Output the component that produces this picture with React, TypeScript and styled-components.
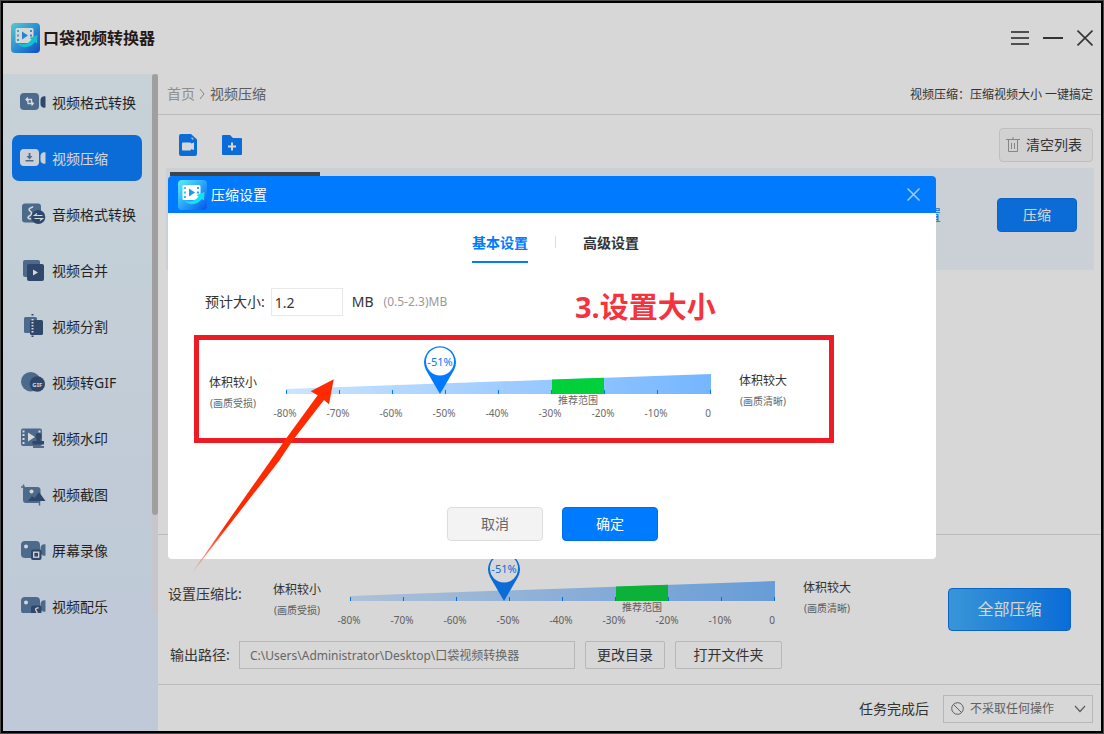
import React, { useId, useState } from "react";
import styled, { createGlobalStyle } from "styled-components";

const BLUE = "#007aff";
const SLATE = "#5277a0";
const NAVY = "#2e4c77";

const GlobalStyle = createGlobalStyle`
  *, *::before, *::after { box-sizing: border-box; }
  body {
    margin: 0;
    background: #fff;
    color: #333;
    font: 14px/20px "Noto Sans", "Noto Sans CJK SC", sans-serif;
  }
  button, input, select { font: inherit; color: inherit; margin: 0; }
  button { cursor: pointer; }
  svg { display: block; flex: none; }
`;

/* ---------- window frame ---------- */

const Frame = styled.div`
  min-height: 100vh;
  display: flex;
  border: 1px solid #4a4a4a;
`;

const Window = styled.div`
  position: relative;
  flex: 1;
  min-width: 0;
  display: flex;
  flex-direction: column;
  border: 2px solid #000;
  background: #fff;
`;

const TitleBar = styled.header`
  height: 71px;
  padding: 0 8px 2px;
  display: flex;
  align-items: center;
  justify-content: space-between;
`;

const Brand = styled.h1`
  margin: 0;
  display: flex;
  align-items: center;
  gap: 3px;
  font-size: 16px;
  font-weight: 700;
  color: #1e1210;
`;

const WindowControls = styled.div`
  display: flex;
  align-items: center;
  gap: 14px;
`;

const IconButton = styled.button`
  padding: 0;
  border: 0;
  background: none;
  display: flex;
  color: inherit;
`;

const Columns = styled.div`
  flex: 1;
  display: flex;
  min-height: 0;
`;

/* ---------- sidebar ---------- */

const Sidebar = styled.aside`
  flex: none;
  width: 155px;
  padding-bottom: 102px;
  background: linear-gradient(#ebf9ff, #e1eeff 85%);
  display: flex;
  align-items: flex-start;
`;

const NavList = styled.nav`
  flex: 1;
  padding: 5px 10px 0 9px;
  display: flex;
  flex-direction: column;
  gap: 10px;
`;

const NavItem = styled.a<{ $active?: boolean }>`
  flex: none;
  height: 46px;
  padding-left: 8px;
  display: flex;
  align-items: center;
  gap: 4px;
  border-radius: 7px;
  white-space: nowrap;
  text-decoration: none;
  color: ${(p) => (p.$active ? "#fff" : "#1c1c1c")};
  background: ${(p) => (p.$active ? BLUE : "transparent")};

  span { padding-top: 2px; }
`;

const ScrollTrack = styled.div`
  width: 6px;
  height: 539px;
  background: #ececf0;
`;

const ScrollThumb = styled.div`
  height: 441px;
  border-radius: 3px;
  background: #bababa;
`;

/* ---------- main column ---------- */

const Main = styled.main`
  flex: 1;
  min-width: 0;
  display: flex;
  flex-direction: column;
`;

const BreadcrumbRow = styled.div`
  height: 41px;
  padding: 0 8px 0 9px;
  display: flex;
  align-items: center;
  justify-content: space-between;
  border-bottom: 1px solid #ddd;
`;

const Breadcrumb = styled.nav`
  display: flex;
  align-items: center;
  gap: 4px;
  color: #666;

  a {
    color: #a4a4a4;
    text-decoration: none;
  }
`;

const Hint = styled.p`
  margin: 0;
  padding-top: 2px;
  font-size: 12px;
`;

const Toolbar = styled.div`
  padding: 13px 8px 6px 21px;
  display: flex;
  align-items: center;
  gap: 25px;
`;

const ClearButton = styled.button`
  margin-left: auto;
  width: 94px;
  height: 34px;
  padding: 0 4px 0 0;
  display: flex;
  align-items: center;
  justify-content: center;
  gap: 6px;
  border: 1px solid #e2e2e2;
  border-radius: 4px;
  background: #f8f8f8;
`;

const FileList = styled.div`
  flex: 1;
  padding: 0 7px 0 8px;
`;

const FileRow = styled.div`
  height: 102px;
  padding: 0 17px 8px;
  display: flex;
  align-items: center;
  justify-content: flex-end;
  gap: 56px;
  background: #f1f7ff;
`;

const ThumbEdge = styled.div`
  align-self: flex-start;
  width: 150px;
  height: 85px;
  margin: 4px auto 0 -13px;
  background: #474747;
`;

const TextLink = styled.a`
  color: ${BLUE};
  text-decoration: none;
`;

const Button = styled.button<{ $width: number; $height: number; $look?: "plain" | "soft" | "glow" }>`
  flex: none;
  width: ${(p) => p.$width}px;
  height: ${(p) => p.$height}px;
  padding: 0;
  border: 1px solid
    ${(p) => (p.$look === "plain" ? "#d8d8d8" : p.$look === "soft" ? "#ddd" : "#006fe8")};
  border-radius: ${(p) => (p.$look === "plain" ? 2 : 4)}px;
  color: ${(p) => (p.$look === "plain" ? "#333" : p.$look === "soft" ? "#666" : "#fff")};
  background: ${(p) =>
    p.$look === "plain"
      ? "transparent"
      : p.$look === "soft"
        ? "#f3f3f3"
        : p.$look === "glow"
          ? "linear-gradient(90deg, #39aeff, #007aff)"
          : BLUE};
  font-size: ${(p) => (p.$look === "glow" ? 16 : 14)}px;
`;

const Settings = styled.section`
  padding: 14px 30px 15px 10px;
  display: flex;
  align-items: center;
  justify-content: space-between;
  border-top: 1px solid #ddd;
`;

const SettingsRows = styled.div`
  display: flex;
  flex-direction: column;
  gap: 12px;
`;

const RatioRow = styled.div`
  display: flex;
`;

const RatioLabel = styled.span`
  width: 105px;
  padding-top: 35px;
`;

const OutputRow = styled.div`
  display: flex;
  align-items: center;
  gap: 10px;

  label { padding-left: 2px; width: 61px; white-space: nowrap; }
`;

const PathInput = styled.input`
  width: 336px;
  height: 28px;
  padding: 0 10px;
  border: 1px solid #d8d8d8;
  background: transparent;
  font-size: 12px;
  color: #727272;
`;

const Footer = styled.footer`
  height: 47px;
  padding: 1px 8px 0;
  display: flex;
  align-items: center;
  justify-content: flex-end;
  gap: 14px;
  border-top: 1px solid #ddd;
`;

const SelectBox = styled.div`
  width: 150px;
  height: 28px;
  padding: 0 6px 0 7px;
  display: flex;
  align-items: center;
  gap: 6px;
  border: 1px solid #d8d8d8;
  color: #6a6a6a;

  select {
    flex: 1;
    min-width: 0;
    padding: 0;
    border: 0;
    appearance: none;
    background: none;
    font-size: 12px;
  }
`;

/* ---------- compression scale ---------- */

const Scale = styled.div`
  display: flex;
  align-items: flex-start;
`;

const EndLabel = styled.div<{ $drop: number }>`
  width: 59px;
  padding-top: ${(p) => p.$drop}px;
  font-size: 12px;
  line-height: 20px;
  white-space: nowrap;

  small {
    display: block;
    padding-left: 1px;
    font-size: 10px;
    line-height: 20px;
    color: #666;
  }
`;

const ScaleTrack = styled.div`
  position: relative;
  width: 456px;
  height: 80px;
  margin-right: 15px;

  input {
    position: absolute;
    inset: 0;
    width: 100%;
    height: 100%;
    opacity: 0;
    cursor: pointer;
  }
`;

const ScaleText = styled.text`
  font-size: 10px;
  text-anchor: middle;
  fill: #6a6a6a;
`;

/* ---------- dialog ---------- */

const Overlay = styled.div`
  position: absolute;
  inset: 0;
  display: flex;
  align-items: center;
  justify-content: center;
  background: rgba(55, 55, 55, 0.2);
`;

const Dialog = styled.div`
  position: relative;
  width: 768px;
  margin-top: 1px;
  border-radius: 4px;
  background: #fff;
`;

const DialogHeader = styled.header`
  height: 37px;
  padding: 0 16px 0 10px;
  display: flex;
  align-items: center;
  justify-content: space-between;
  border-radius: 4px 4px 0 0;
  background: ${BLUE};
  color: #fff;

  h2 {
    margin: 0;
    display: flex;
    align-items: center;
    gap: 4px;
    font-size: 14px;
    font-weight: 400;
  }
`;

const DialogBody = styled.div`
  padding: 0 36px 18px 37px;
`;

const Tabs = styled.div`
  height: 50px;
  padding: 20px 0 0 6px;
  display: flex;
  align-items: flex-start;
  justify-content: center;
  gap: 27px;
`;

const Tab = styled.button<{ $active?: boolean }>`
  height: 30px;
  padding: 0 0 8px;
  border: 0;
  border-bottom: 2px solid ${(p) => (p.$active ? BLUE : "transparent")};
  background: none;
  font-weight: 600;
  color: ${(p) => (p.$active ? BLUE : "#333")};
`;

const TabDivider = styled.span`
  width: 1px;
  height: 12px;
  margin-top: 3px;
  background: #ddd;
`;

const SizeRow = styled.div`
  margin-top: 25px;
  display: flex;
  align-items: center;

  input {
    width: 72px;
    height: 28px;
    margin: 0 9px 0 6px;
    padding: 0 3px;
    border: 1px solid #e8e8e8;
  }
  small {
    margin-left: 10px;
    font-size: 12px;
    color: #999;
  }
`;

const ScaleRow = styled.div`
  margin: 26px 0 85px;
  padding-left: 4px;
`;

const DialogActions = styled.div`
  display: flex;
  justify-content: center;
  gap: 19px;
`;

/* ---------- tutorial marks drawn over the dialog ---------- */

const StepCaption = styled.strong`
  position: absolute;
  left: 407px;
  top: 111px;
  font-size: 29px;
  line-height: 40px;
  font-weight: 700;
  color: #f5333f;
  white-space: nowrap;
`;

const StepFrame = styled.div`
  position: absolute;
  left: 26px;
  top: 159px;
  width: 640px;
  height: 108px;
  border: 5px solid #ed1c24;
  pointer-events: none;
`;

const StepArrow = styled.svg`
  position: absolute;
  left: 22px;
  top: 200px;
  pointer-events: none;
`;

/* ---------- drawings ---------- */

function Logo() {
  const id = useId();
  return (
    <svg width="29" height="30" viewBox="0 0 29 30" aria-hidden="true">
      <defs>
        <linearGradient id={id} x1="0" y1="0" x2="1" y2="1">
          <stop offset="0" stopColor="#5cf0f5" />
          <stop offset="0.5" stopColor="#2ba5fb" />
          <stop offset="1" stopColor="#0552e8" />
        </linearGradient>
      </defs>
      <rect width="29" height="30" rx="4" fill={`url(#${id})`} />
      <path
        fill="#fff"
        fillRule="evenodd"
        d="M6 5h15a1.500 1.500 0 0 1 1.500 1.500v12A1.500 1.500 0 0 1 21 20H6a1.500 1.500 0 0 1-1.500-1.500v-12A1.500 1.500 0 0 1 6 5zM6 7v2h2V7zm0 4.500v2h2v-2zM6 16v2h2v-2zM19 7v2h2V7zm0 4.500v2h2v-2z"
      />
      <path d="M11 8.500l6 4-6 4z" fill="#1b9bf5" />
      <path
        d="M6 20c4 2.500 11 1.500 14.500-3.500L18.500 15l8-3-.5 8.500-2-1.500c-5 6.500-13.500 7-18 1z"
        fill="#0fe3f2"
      />
    </svg>
  );
}

const Lens = ({ fill = NAVY }: { fill?: string }) => (
  <path d="M25.500 6.500v11c-2.500.8-5-1-5-3.500v-4c0-2.500 2.500-4.300 5-3.500z" fill={fill} />
);

const navIcons: Record<string, React.ReactNode> = {
  convert: (
    <>
      <rect y="3" width="19" height="17" rx="4" fill={SLATE} />
      <Lens />
      <path d="M6 9.500h5.500v4M8 7.500l-2 2 2 2M13 13.500H8V10M11.500 11.800l1.800 1.800-1.800 1.900" stroke="#fff" strokeWidth="1.300" fill="none" />
    </>
  ),
  compress: (
    <>
      <rect y="3" width="19" height="17" rx="4" fill="#f0f6ff" />
      <Lens fill="#f0f6ff" />
      <path d="M9.500 7v5" stroke={SLATE} strokeWidth="1.800" />
      <path d="M6.500 10h6l-3 3.500zM5.500 14h8v1.500h-8z" fill={SLATE} />
    </>
  ),
  audio: (
    <>
      <rect x="2" y="1.500" width="19" height="19" rx="3" fill={SLATE} />
      <path d="M13 4.500c-1 1.500-4 1-4 3s3.500 1.500 2.500 4.500c-.6 1.800-3 1.500-3.500 3.500.5 1.500 2 1.500 3 1" stroke="#fff" strokeWidth="1.500" fill="none" />
      <circle cx="18.300" cy="15" r="7" fill={NAVY} />
      <path d="M22.500 13.500h-8l2.500-2M14.500 16.500h8l-2.500 2" stroke="#fff" strokeWidth="1.200" fill="none" />
    </>
  ),
  merge: (
    <>
      <rect x="3" y="2" width="17" height="17" rx="2" fill={SLATE} />
      <rect x="7" y="6" width="17" height="17" rx="2" fill={NAVY} />
      <path d="M13 11.500l5 3-5 3z" fill="#fff" />
    </>
  ),
  split: (
    <>
      <rect x="4" y="3" width="13" height="16" rx="1.500" fill={SLATE} />
      <rect x="10" y="6" width="13" height="15" rx="1.500" fill={NAVY} />
      <path d="M12.500 5v15" stroke="#fff" strokeWidth="2" strokeDasharray="1.500 1.500" />
      <path d="M12.500 0v1.500M12.500 21.500V23" stroke={NAVY} strokeWidth="2" />
    </>
  ),
  gif: (
    <>
      <circle cx="10.700" cy="11.700" r="9.700" fill={SLATE} />
      <circle cx="17.300" cy="14" r="7.700" fill={NAVY} />
      <text x="17.300" y="16.500" fontSize="6" fontWeight="700" textAnchor="middle" fill="#fff">GIF</text>
    </>
  ),
  watermark: (
    <>
      <rect x="1" y="2.500" width="21" height="17.500" rx="2" fill={SLATE} />
      <path d="M2.500 4.500h2v2h-2zM2.500 8h2v2h-2zM2.500 12h2v2h-2zM2.500 16h2v2h-2zM18.500 4.500h2v2h-2z" fill="#fff" />
      <path d="M8 6.500l7 4.500-7 4.500z" fill="#fff" />
      <path d="M15.500 10a3 3 0 1 1 6 0c0 2-1.500 2.500-1.200 5H24v3.500H12.500V15h4.200c.3-2.500-1.200-3-1.200-5z" fill={NAVY} />
      <path d="M13 21h11" stroke={NAVY} strokeWidth="1.500" />
    </>
  ),
  snapshot: (
    <>
      <rect x="3" y="5" width="17.500" height="16" rx="3" fill={SLATE} />
      <path d="M3.500 2.500v4M1 5h4M19.500 19.500v4" stroke={SLATE} strokeWidth="1.500" />
      <circle cx="11.500" cy="9.500" r="2" fill="#fff" />
      <path d="M8 19l4-5 2.500 2 4.500-6 6.500 9z" fill={NAVY} />
    </>
  ),
  record: (
    <>
      <rect x="1" y="3" width="19" height="17" rx="4" fill={SLATE} />
      <Lens fill={SLATE} />
      <circle cx="6" cy="8.500" r="2" fill="#fff" />
      <rect x="11" y="11.500" width="10.500" height="10.500" rx="2" fill={NAVY} />
      <rect x="13.700" y="14.200" width="5" height="5" fill="none" stroke="#fff" strokeWidth="1.300" />
    </>
  ),
  music: (
    <>
      <clipPath id="list-bottom">
        <rect width="28" height="19" />
      </clipPath>
      <g clipPath="url(#list-bottom)">
        <rect x="1" y="3" width="19" height="17" rx="4" fill={SLATE} />
        <Lens fill={SLATE} />
        <circle cx="6" cy="8.500" r="2" fill="#fff" />
        <rect x="11" y="11.500" width="10.500" height="10.500" rx="2" fill={NAVY} />
        <path d="M18.500 13.500c-1 1-3 .5-3 2s2 1 1.500 4" stroke="#fff" strokeWidth="1.300" fill="none" />
      </g>
    </>
  ),
};

function CompressionScale({ label }: { label: string }) {
  const [value, setValue] = useState(-51);
  const id = useId();
  const x = (v: number) => Math.round(18.5 + ((v + 80) * 424) / 80);
  const ticks = [-80, -70, -60, -50, -40, -30, -20, -10, 0];
  const pin = x(value);
  return (
    <Scale>
      <EndLabel $drop={31}>
        体积较小<small>(画质受损)</small>
      </EndLabel>
      <ScaleTrack>
        <svg width="456" height="80" viewBox="0 0 456 80" aria-hidden="true">
          <defs>
            <linearGradient id={id}>
              <stop offset="0" stopColor="#cce4ff" />
              <stop offset="1" stopColor="#75b6ff" />
            </linearGradient>
          </defs>
          <path d="M18 47L443 32V52H18z" fill={`url(#${id})`} />
          <path d="M284 37.600L336 35.800V52H284z" fill="#00d03a" />
          {ticks.map((t) => (
            <rect key={t} x={x(t) - 1} y="48" width="1" height="4" fill={BLUE} />
          ))}
          {ticks.map((t) => (
            <ScaleText key={t} x={t ? x(t) - 2 : 440} y="75">
              {t ? `${t}%` : "0"}
            </ScaleText>
          ))}
          <ScaleText x="310" y="62">推荐范围</ScaleText>
          <path d={`M${pin} 52L${pin - 14} 28a16 16 0 1 1 28 0z`} fill={BLUE} />
          <circle cx={pin} cy="19.500" r="14" fill="#fff" />
          <text x={pin} y="24" fontSize="11" textAnchor="middle" fill={BLUE}>
            {value}%
          </text>
        </svg>
        <input
          type="range"
          min={-80}
          max={0}
          value={value}
          aria-label={label}
          onChange={(e) => setValue(Number(e.target.value))}
        />
      </ScaleTrack>
      <EndLabel $drop={29}>
        体积较大<small>(画质清晰)</small>
      </EndLabel>
    </Scale>
  );
}

const navItems: [string, string][] = [
  ["convert", "视频格式转换"],
  ["compress", "视频压缩"],
  ["audio", "音频格式转换"],
  ["merge", "视频合并"],
  ["split", "视频分割"],
  ["gif", "视频转GIF"],
  ["watermark", "视频水印"],
  ["snapshot", "视频截图"],
  ["record", "屏幕录像"],
  ["music", "视频配乐"],
];

export default function App() {
  const [size, setSize] = useState("1.2");
  return (
    <>
      <GlobalStyle />
      <Frame>
        <Window>
          <TitleBar>
            <Brand>
              <Logo />
              口袋视频转换器
            </Brand>
            <WindowControls>
              <IconButton aria-label="菜单">
                <svg width="18" height="18" stroke="#555" strokeWidth="2">
                  <path d="M0 3h18M0 9h18M0 15h18" />
                </svg>
              </IconButton>
              <IconButton aria-label="最小化">
                <svg width="20" height="18" stroke="#333" strokeWidth="2">
                  <path d="M0 9h20" />
                </svg>
              </IconButton>
              <IconButton aria-label="关闭">
                <svg width="16" height="18" stroke="#333" strokeWidth="1.700">
                  <path d="M.5 1.500l15 15M15.500 1.500l-15 15" />
                </svg>
              </IconButton>
            </WindowControls>
          </TitleBar>

          <Columns>
            <Sidebar>
              <NavList>
                {navItems.map(([icon, text]) => (
                  <NavItem key={icon} href="#" $active={icon === "compress"}>
                    <svg width="28" height="24" viewBox="0 0 28 24" aria-hidden="true">
                      {navIcons[icon]}
                    </svg>
                    <span>{text}</span>
                  </NavItem>
                ))}
              </NavList>
              <ScrollTrack>
                <ScrollThumb />
              </ScrollTrack>
            </Sidebar>

            <Main>
              <BreadcrumbRow>
                <Breadcrumb>
                  <a href="#">首页</a>
                  <svg width="7" height="12" fill="none" stroke="#999">
                    <path d="M1 1l4 5-4 5" />
                  </svg>
                  <span>视频压缩</span>
                </Breadcrumb>
                <Hint>视频压缩：压缩视频大小 一键搞定</Hint>
              </BreadcrumbRow>

              <Toolbar>
                <IconButton aria-label="添加视频">
                  <svg width="18" height="22">
                    <path d="M2 0h10l6 5.500V20a2 2 0 0 1-2 2H2a2 2 0 0 1-2-2V2a2 2 0 0 1 2-2z" fill={BLUE} />
                    <path d="M4 8.500h7a1 1 0 0 1 1 1l3-1v7.500l-3-1a1 1 0 0 1-1 1.500H4a1 1 0 0 1-1-1v-6a1 1 0 0 1 1-1z" fill="#fff" />
                    <path d="M13 3.500v1.500h1.500" stroke="#fff" fill="none" />
                  </svg>
                </IconButton>
                <IconButton aria-label="添加文件夹">
                  <svg width="20" height="20">
                    <path d="M1 0h7l3 3h8a1 1 0 0 1 1 1v15a1 1 0 0 1-1 1H1a1 1 0 0 1-1-1V1a1 1 0 0 1 1-1z" fill={BLUE} />
                    <path d="M10 7.500v8M6 11.500h8" stroke="#fff" strokeWidth="2" />
                  </svg>
                </IconButton>
                <ClearButton>
                  <svg width="14" height="16" fill="none" stroke="#999">
                    <path d="M0 2.500h14M7 0v2.500M2.500 2.500v12h9v-12M5.500 6v6M8.500 6v6" />
                  </svg>
                  清空列表
                </ClearButton>
              </Toolbar>

              <FileList>
                <FileRow>
                  <ThumbEdge />
                  <TextLink href="#">设置</TextLink>
                  <Button $width={80} $height={34}>压缩</Button>
                </FileRow>
              </FileList>

              <Settings>
                <SettingsRows>
                  <RatioRow>
                    <RatioLabel>设置压缩比:</RatioLabel>
                    <CompressionScale label="设置压缩比" />
                  </RatioRow>
                  <OutputRow>
                    <label htmlFor="output-path">输出路径:</label>
                    <PathInput
                      id="output-path"
                      readOnly
                      value={"C:\\Users\\Administrator\\Desktop\\口袋视频转换器"}
                    />
                    <Button $width={80} $height={28} $look="plain">更改目录</Button>
                    <Button $width={107} $height={28} $look="plain">打开文件夹</Button>
                  </OutputRow>
                </SettingsRows>
                <Button $width={123} $height={43} $look="glow">全部压缩</Button>
              </Settings>

              <Footer>
                <label htmlFor="after-task">任务完成后</label>
                <SelectBox>
                  <svg width="13" height="13" fill="none" stroke="#666">
                    <circle cx="6.500" cy="6.500" r="5.800" />
                    <path d="M2.500 2.500l8 8" />
                  </svg>
                  <select id="after-task">
                    <option>不采取任何操作</option>
                  </select>
                  <svg width="12" height="8" fill="none" stroke="#666" strokeWidth="1.200">
                    <path d="M1 1l5 5.500L11 1" />
                  </svg>
                </SelectBox>
              </Footer>
            </Main>
          </Columns>

          <Overlay>
            <Dialog role="dialog" aria-label="压缩设置">
              <DialogHeader>
                <h2>
                  <Logo />
                  压缩设置
                </h2>
                <IconButton aria-label="关闭">
                  <svg width="13" height="13" stroke="#9fceff" strokeWidth="1.500">
                    <path d="M.5.5l12 12M12.500.5l-12 12" />
                  </svg>
                </IconButton>
              </DialogHeader>
              <DialogBody>
                <Tabs role="tablist">
                  <Tab role="tab" aria-selected="true" $active>基本设置</Tab>
                  <TabDivider />
                  <Tab role="tab" aria-selected="false">高级设置</Tab>
                </Tabs>
                <SizeRow>
                  <label htmlFor="target-size">预计大小:</label>
                  <input id="target-size" value={size} onChange={(e) => setSize(e.target.value)} />
                  <span>MB</span>
                  <small>(0.5-2.3)MB</small>
                </SizeRow>
                <ScaleRow>
                  <CompressionScale label="压缩比" />
                </ScaleRow>
                <DialogActions>
                  <Button $width={96} $height={34} $look="soft">取消</Button>
                  <Button $width={96} $height={34}>确定</Button>
                </DialogActions>
              </DialogBody>
              <StepCaption>3.设置大小</StepCaption>
              <StepFrame />
              <StepArrow width="150" height="204" viewBox="190 376 150 204" aria-hidden="true">
                <defs>
                  <linearGradient id="arrow-fade" gradientUnits="userSpaceOnUse" x1="192" y1="573" x2="225" y2="528">
                    <stop offset="0" stopColor="#ff2a00" stopOpacity="0.300" />
                    <stop offset="1" stopColor="#ff2a00" />
                  </linearGradient>
                </defs>
                <path
                  d="M333.700 379.300L329 404.300L324 400L293 440L279 461L230 524L192 573L226 524L271 460L285 440L317.700 395.300L310.700 391.300z"
                  fill="url(#arrow-fade)"
                />
              </StepArrow>
            </Dialog>
          </Overlay>
        </Window>
      </Frame>
    </>
  );
}
